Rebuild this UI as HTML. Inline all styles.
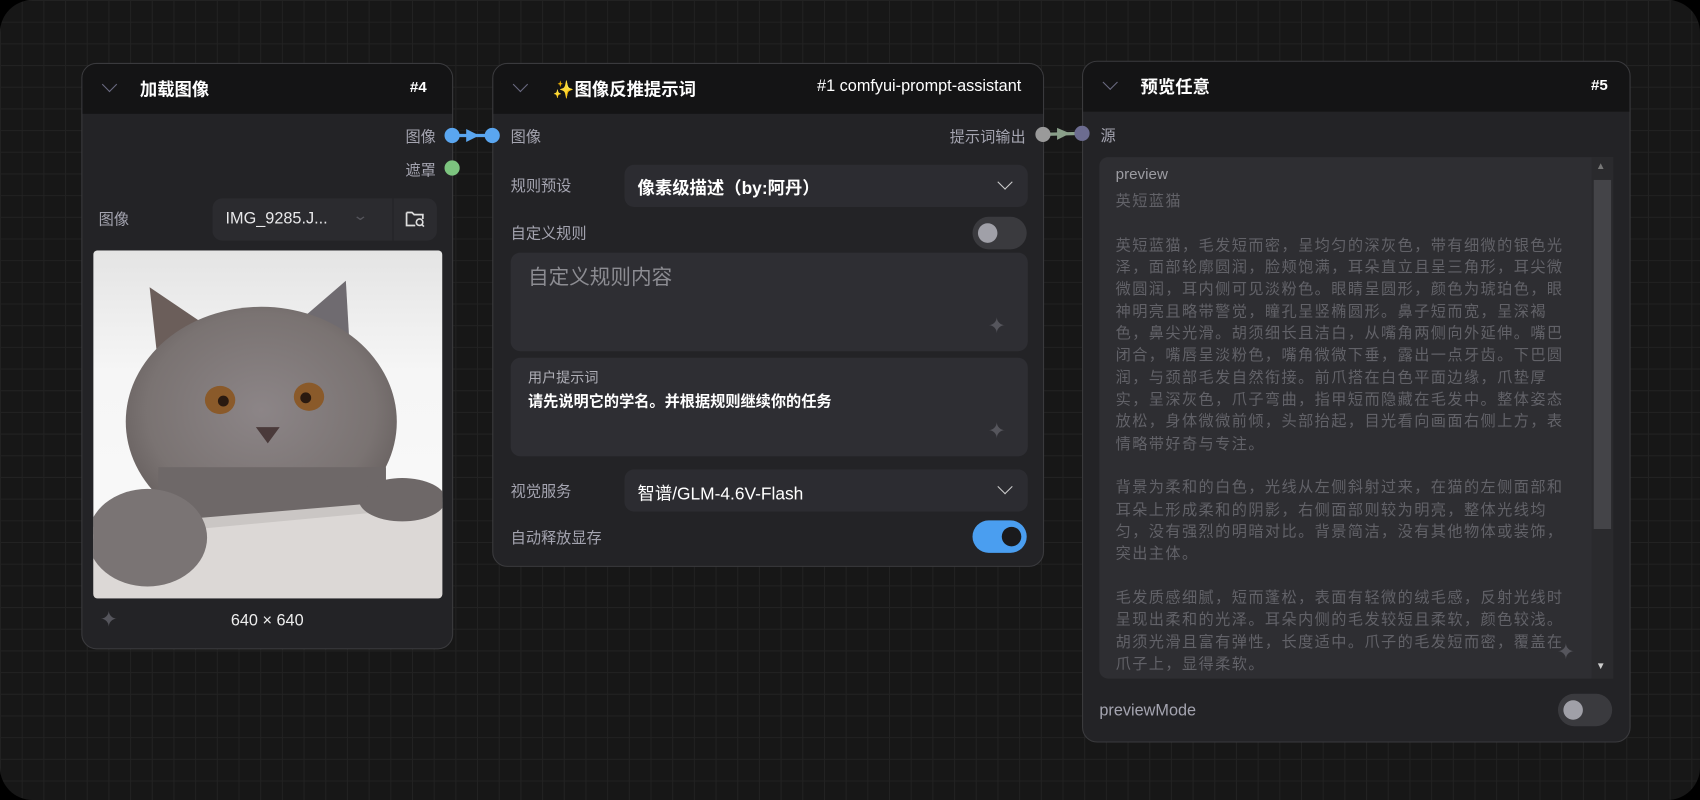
<!DOCTYPE html>
<html><head><meta charset="utf-8"><style>
*{box-sizing:border-box;margin:0;padding:0}
html,body{width:1700px;height:800px;overflow:hidden;background:#000}
body{font-family:"Liberation Sans","Noto Sans CJK SC",sans-serif}
#wrap{position:absolute;left:0;top:0;width:1568px;height:738px;transform:scale(1.08418,1.08401);transform-origin:0 0}
#canvas{position:absolute;left:0;top:0;width:1568px;height:738px;border-radius:30px;background-color:#171717;
background-image:linear-gradient(#222 1px,transparent 1px),linear-gradient(90deg,#222 1px,transparent 1px);background-size:20px 20px;overflow:hidden}
.node{position:absolute;background:#232326;border:1px solid #3a3a3d;border-radius:14px;overflow:hidden}
.hdr{position:absolute;left:0;top:0;right:0;height:46px;background:#141415}
.t{position:absolute;white-space:nowrap}
.chev{position:absolute;width:10px;height:10px;border-right:1.5px solid #6a6a80;border-bottom:1.5px solid #6a6a80;transform:rotate(45deg)}
.title{color:#fff;font-weight:bold;font-size:16px}
.lbl{color:#a4a4b0;font-size:14px}
.dot{position:absolute;width:14px;height:14px;border-radius:50%}
.box{position:absolute;background:#2c2c31;border-radius:9px}
.tog{position:absolute;width:50px;height:30px;border-radius:15px;background:#3a3a3e}
.knob{position:absolute;top:6px;width:18px;height:18px;border-radius:50%}
.spark{position:absolute;color:#55555c;font-size:20px}
.pv{position:absolute;left:15px;top:30px;color:#626268;font-size:14px;line-height:20.33px;letter-spacing:1.3px}
</style></head><body><div id="wrap"><div id="canvas">

<svg style="position:absolute;left:0;top:0" width="1568" height="738">
<line x1="417" y1="125" x2="454" y2="125" stroke="#5aa6f0" stroke-width="3"/>
<polygon points="430,119 442,125 430,131" fill="#5aa6f0"/>
<line x1="962" y1="124" x2="998" y2="123" stroke="#8aa08a" stroke-width="3"/>
<polygon points="975,118 987,123 975,129" fill="#8aa08a"/>
</svg>

<div class="node" style="left:75px;top:58px;width:343px;height:541px">
 <div class="hdr"></div>
 <div class="chev" style="left:20px;top:14px"></div>
 <div class="t title" style="left:53px;top:10px">加载图像</div>
 <div class="t title" style="left:302px;top:13px;font-size:14px">#4</div>
 <div class="t lbl" style="right:15px;top:57px">图像</div>
 <div class="t lbl" style="right:15px;top:88px">遮罩</div>
 <div class="t lbl" style="left:15px;top:133px">图像</div>
 <div class="box" style="left:120px;top:124px;width:207px;height:39px;background:#2b2b2f">
  <div class="t" style="left:12px;top:10px;color:#e8e8ea;font-size:15px">IMG_9285.J...</div>
  <div class="t" style="left:131px;top:8px;color:#55555c;font-size:13px;transform:scaleX(1.4)">⌄</div>
  <div style="position:absolute;left:166px;top:0;width:1px;height:39px;background:#232326"></div>
  <svg style="position:absolute;left:177px;top:10px" width="20" height="18" viewBox="0 0 20 18"><path d="M2 3h5l2 2h8v4M2 3v12h8" fill="none" stroke="#ddd" stroke-width="1.6"/><circle cx="14" cy="12" r="3" fill="none" stroke="#ddd" stroke-width="1.5"/><line x1="16" y1="14" x2="18" y2="16" stroke="#ddd" stroke-width="1.5"/></svg>
 </div>
 <svg style="position:absolute;left:10px;top:172px;border-radius:4px" width="322" height="321" viewBox="0 0 322 321">
  <defs><linearGradient id="bg" x1="0" y1="0" x2="0" y2="1"><stop offset="0" stop-color="#e4e4e4"/><stop offset="0.35" stop-color="#f6f6f6"/><stop offset="1" stop-color="#fafafa"/></linearGradient>
  <radialGradient id="fur" cx="0.5" cy="0.45" r="0.6"><stop offset="0" stop-color="#8c8587"/><stop offset="0.7" stop-color="#7a7372"/><stop offset="1" stop-color="#625b5a"/></radialGradient></defs>
  <rect width="322" height="321" fill="url(#bg)"/>
  <polygon points="52,34 120,80 62,125" fill="#6b5e5a"/>
  <polygon points="233,28 238,115 175,78" fill="#6f6b70"/>
  <ellipse cx="155" cy="158" rx="125" ry="106" fill="url(#fur)"/>
  <rect x="60" y="200" width="210" height="80" fill="#6e6868"/>
  <polygon points="0,262 322,232 322,321 0,321" fill="#dcd8d6"/>
  <polygon points="0,255 322,228 322,236 0,266" fill="#cac6c4"/>
  <ellipse cx="50" cy="265" rx="55" ry="45" fill="#7a7474"/>
  <ellipse cx="285" cy="230" rx="40" ry="20" fill="#6e6868"/>
  <ellipse cx="117" cy="138" rx="14" ry="13" fill="#8a5a2a"/>
  <ellipse cx="199" cy="135" rx="14" ry="13" fill="#8a5a2a"/>
  <circle cx="120" cy="139" r="5" fill="#2a1a10"/><circle cx="196" cy="136" r="5" fill="#2a1a10"/>
  <path d="M150 163 L172 163 L161 178 Z" fill="#4a3a3a"/>
 </svg>
 <div class="spark" style="left:16px;top:500px">✦</div>
 <div class="t" style="left:0;right:0;text-align:center;top:505px;color:#eee;font-size:15px">640 × 640</div>
</div>
<div class="dot" style="left:410px;top:118px;background:#5aa6f0"></div>
<div class="dot" style="left:410px;top:148px;background:#7cc47f"></div>

<div class="node" style="left:454px;top:58px;width:509px;height:465px">
 <div class="hdr"></div>
 <div class="chev" style="left:20px;top:14px"></div>
 <div class="t title" style="left:55px;top:10px">✨图像反推提示词</div>
 <div class="t" style="right:20px;top:12px;color:#fff;font-size:15px">#1 comfyui-prompt-assistant</div>
 <div class="t lbl" style="left:16px;top:57px">图像</div>
 <div class="t lbl" style="right:16px;top:57px">提示词输出</div>
 <div class="t lbl" style="left:16px;top:102px">规则预设</div>
 <div class="box" style="left:121px;top:93px;width:372px;height:39px">
  <div class="t" style="left:12px;top:8px;color:#fff;font-size:16px;font-weight:bold">像素级描述（by:阿丹）</div>
  <div class="chev" style="left:346px;top:11px;border-color:#ccc"></div>
 </div>
 <div class="t lbl" style="left:16px;top:146px">自定义规则</div>
 <div class="tog" style="left:442px;top:141px"><div class="knob" style="left:5px;background:#a0a0a8"></div></div>
 <div class="box" style="left:16px;top:174px;width:477px;height:91px;background:#2e2e33">
  <div class="t" style="left:16px;top:8px;color:#8c8c92;font-size:19px">自定义规则内容</div>
  <div class="spark" style="left:440px;top:55px">✦</div>
 </div>
 <div class="box" style="left:16px;top:271px;width:477px;height:91px;background:#2e2e33">
  <div class="t" style="left:16px;top:8px;color:#b0b0b8;font-size:13px">用户提示词</div>
  <div class="t" style="left:16px;top:30px;color:#fff;font-size:14px;font-weight:bold">请先说明它的学名。并根据规则继续你的任务</div>
  <div class="spark" style="left:440px;top:55px">✦</div>
 </div>
 <div class="t lbl" style="left:16px;top:384px">视觉服务</div>
 <div class="box" style="left:121px;top:374px;width:372px;height:39px">
  <div class="t" style="left:12px;top:9px;color:#fff;font-size:16px">智谱/GLM-4.6V-Flash</div>
  <div class="chev" style="left:346px;top:11px;border-color:#ccc"></div>
 </div>
 <div class="t lbl" style="left:16px;top:427px">自动释放显存</div>
 <div class="tog" style="left:442px;top:421px;background:#4a9ef0"><div class="knob" style="left:27px;background:#1a1a1c"></div></div>
</div>
<div class="dot" style="left:447px;top:118px;background:#5aa6f0"></div>
<div class="dot" style="left:955px;top:117px;background:#9a9a9a"></div>

<div class="node" style="left:998px;top:56px;width:506px;height:629px">
 <div class="hdr"></div>
 <div class="chev" style="left:20px;top:14px"></div>
 <div class="t title" style="left:53px;top:10px">预览任意</div>
 <div class="t title" style="right:20px;top:13px;font-size:14px">#5</div>
 <div class="t lbl" style="left:16px;top:58px">源</div>
 <div class="box" style="left:15px;top:88px;width:474px;height:481px;background:#2e2e32;border-radius:8px 0 0 8px;overflow:hidden">
  <div class="t" style="left:15px;top:7px;color:#9c9ca2;font-size:14px">preview</div>
  <div class="pv">英短蓝猫<br><br>英短蓝猫，毛发短而密，呈均匀的深灰色，带有细微的银色光<br>泽，面部轮廓圆润，脸颊饱满，耳朵直立且呈三角形，耳尖微<br>微圆润，耳内侧可见淡粉色。眼睛呈圆形，颜色为琥珀色，眼<br>神明亮且略带警觉，瞳孔呈竖椭圆形。鼻子短而宽，呈深褐<br>色，鼻尖光滑。胡须细长且洁白，从嘴角两侧向外延伸。嘴巴<br>闭合，嘴唇呈淡粉色，嘴角微微下垂，露出一点牙齿。下巴圆<br>润，与颈部毛发自然衔接。前爪搭在白色平面边缘，爪垫厚<br>实，呈深灰色，爪子弯曲，指甲短而隐藏在毛发中。整体姿态<br>放松，身体微微前倾，头部抬起，目光看向画面右侧上方，表<br>情略带好奇与专注。<br><br>背景为柔和的白色，光线从左侧斜射过来，在猫的左侧面部和<br>耳朵上形成柔和的阴影，右侧面部则较为明亮，整体光线均<br>匀，没有强烈的明暗对比。背景简洁，没有其他物体或装饰，<br>突出主体。<br><br>毛发质感细腻，短而蓬松，表面有轻微的绒毛感，反射光线时<br>呈现出柔和的光泽。耳朵内侧的毛发较短且柔软，颜色较浅。<br>胡须光滑且富有弹性，长度适中。爪子的毛发短而密，覆盖在<br>爪子上，显得柔软。</div>
  <div style="position:absolute;left:454px;top:0;width:20px;height:481px;background:#2a2a2d"></div>
  <div style="position:absolute;left:456px;top:21px;width:16px;height:322px;background:#444448"></div>
  <div class="t" style="left:458px;top:3px;color:#777;font-size:9px">▲</div>
  <div class="t" style="left:458px;top:464px;color:#ccc;font-size:9px">▼</div>
  <div class="spark" style="left:422px;top:444px">✦</div>
 </div>
 <div class="t lbl" style="left:15px;top:590px;font-size:15px">previewMode</div>
 <div class="tog" style="left:438px;top:583px"><div class="knob" style="left:5px;background:#a0a0a8"></div></div>
</div>
<div class="dot" style="left:991px;top:116px;background:#6c6c90"></div>

</div></div></body></html>
